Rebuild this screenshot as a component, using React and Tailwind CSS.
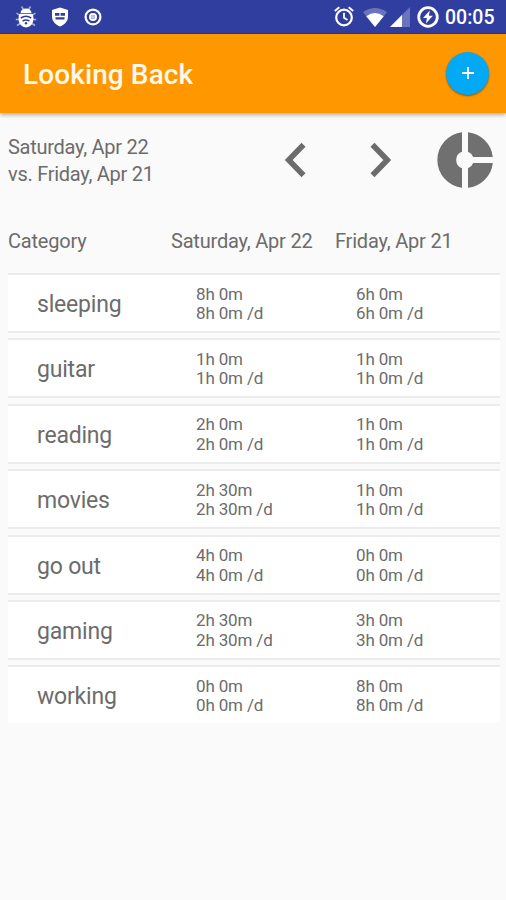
import React from 'react';

const rows = [
  { name: 'sleeping', current: '8h 0m', previous: '6h 0m' },
  { name: 'guitar', current: '1h 0m', previous: '1h 0m' },
  { name: 'reading', current: '2h 0m', previous: '1h 0m' },
  { name: 'movies', current: '2h 30m', previous: '1h 0m' },
  { name: 'go out', current: '4h 0m', previous: '0h 0m' },
  { name: 'gaming', current: '2h 30m', previous: '3h 0m' },
  { name: 'working', current: '0h 0m', previous: '8h 0m' },
];

const BugIcon = () => (
  <svg width="22" height="24" viewBox="0 0 22 24" fill="none">
    <path d="M6.500 1.500l2.500 4M15.500 1.500l-2.500 4M1.500 8l4 3M20.500 8l-4 3M.8 14.500h4M21.200 14.500h-4M2 20.500l4-2.500M20 20.500l-4-2.500" stroke="#a9b1e0" strokeWidth="1.500" />
    <path d="M5.500 8a5.500 4.600 0 0 1 11 0z" fill="#fff" />
    <path d="M4.500 8.800h13q1 2 1 5.200a7.500 8.500 0 0 1-15 0q0-3.200 1-5.200z" fill="#fff" />
    <path d="M5.800 13q5.200-3.400 10.400 0M7.600 16q3.400-2 6.800 0" stroke="#303f9f" strokeWidth="1.500" />
    <circle cx="11" cy="18.200" r="1.200" fill="#303f9f" />
  </svg>
);

const ShieldIcon = () => (
  <svg width="18" height="20" viewBox="0 0 18 20">
    <path d="M9 .5l8 2.500v6.500c0 4.500-3.200 8-8 10-4.800-2-8-5.500-8-10V3z" fill="#fff" />
    <path d="M4 6h4.400v2.800H4zM9.600 6H14v2.800H9.600zM4.500 10.200h9v2.300h-9z" fill="#303f9f" />
  </svg>
);

const TargetIcon = () => (
  <svg width="18" height="18" viewBox="0 0 18 18" fill="none">
    <circle cx="9" cy="9" r="7.400" stroke="#fff" strokeWidth="2.200" />
    <circle cx="9" cy="9" r="3" stroke="#fff" strokeWidth="2" />
    <circle cx="9" cy="9" r="2" fill="#c4caec" />
  </svg>
);

const AlarmIcon = () => (
  <svg width="20" height="21" viewBox="0 0 20 21" fill="none" stroke="#fff">
    <circle cx="10" cy="11.500" r="7.800" strokeWidth="2.200" />
    <path d="M10 6.800v5l3.500 2.200" strokeWidth="1.800" />
    <path d="M.8 5L5.300 1.200M19.200 5l-4.500-3.800" strokeWidth="1.900" />
  </svg>
);

const WifiIcon = () => (
  <svg width="24" height="19" viewBox="0 0 24 19">
    <path d="M12 19L0 4.200Q12-4.200 24 4.200z" fill="#6a74ba" />
    <path d="M12 19L3.300 8.200Q12 1.800 20.700 8.200z" fill="#fff" />
  </svg>
);

const SignalIcon = () => (
  <svg width="20" height="20" viewBox="0 0 20 20">
    <path d="M0 20L20 0v20z" fill="#6a74ba" />
    <path d="M0 20L12 8v12z" fill="#fff" />
  </svg>
);

const ChargingIcon = () => (
  <svg width="22" height="22" viewBox="0 0 22 22" fill="none">
    <circle cx="11" cy="11" r="9.300" stroke="#fff" strokeWidth="2.800" />
    <path d="M12.800 4.500L6 12h3.900l-1 5.500 7-7.800h-4z" fill="#fff" />
  </svg>
);

const DonutIcon = () => (
  <svg width="56" height="56" viewBox="0 0 56 56" fill="#707070">
    <path d="M25 .2v19.600a8.700 8.700 0 0 0 0 16.400v19.600A28 28 0 0 1 25 .2z" />
    <path d="M31 .2v19.600a8.700 8.700 0 0 1 5.200 5.200h19.600A28 28 0 0 0 31 .2z" />
    <path d="M31 55.800V36.200a8.700 8.700 0 0 0 5.200-5.200h19.600A28 28 0 0 1 31 55.800z" />
  </svg>
);

const StatusBar = () => (
  <div className="h-[34px] bg-[#303f9f] flex items-center justify-between pl-[15px] pr-[10px] border-b border-[#283593]">
    <div className="flex items-center">
      <BugIcon />
      <div className="ml-[14px]"><ShieldIcon /></div>
      <div className="ml-[15px]"><TargetIcon /></div>
    </div>
    <div className="flex items-center">
      <AlarmIcon />
      <div className="ml-[9px] mt-[2px]"><WifiIcon /></div>
      <div className="ml-[3px] mt-[1px]"><SignalIcon /></div>
      <div className="ml-[7px]"><ChargingIcon /></div>
      <span className="ml-[6px] w-[51px] mt-[2px] text-[19.5px] leading-6 font-medium text-white whitespace-nowrap">00:05</span>
    </div>
  </div>
);

const Duration = ({ value }) => (
  <div className="pt-[2px] text-[17px] leading-[19.5px] tracking-[-0.15px] whitespace-nowrap">
    <p>{value}</p>
    <p>{value} /d</p>
  </div>
);

const App = () => {
  return (
    <div className="w-full min-h-screen bg-[#fafafa] text-[#6c6c6c] font-['Roboto',sans-serif]">
      <StatusBar />

      {/* App bar */}
      <header className="h-[79px] bg-[#ff9800] flex items-center justify-between pl-[23px] pr-[17px] shadow-[0_2px_4px_rgba(0,0,0,0.3)]">
        <h1 className="text-[28px] leading-8 font-medium text-[#fff8ec] tracking-[0.1px] mt-[3px]">Looking Back</h1>
        <button type="button" aria-label="Add" className="w-[43px] h-[43px] mb-px rounded-full bg-[#03a9f4] flex items-center justify-center shadow-[0_1px_2px_rgba(0,0,0,0.45)]">
          <svg width="12" height="12" viewBox="0 0 12 12" stroke="#fff" strokeWidth="1.800">
            <path d="M6 0v12M0 6h12" />
          </svg>
        </button>
      </header>

      {/* Compared dates */}
      <section className="h-[93px] flex items-center pl-2 pr-[13px]">
        <div className="w-[276px] pt-[2px] text-[20px] leading-[27px] tracking-[-0.27px]">
          <p>Saturday, Apr 22</p>
          <p>vs. Friday, Apr 21</p>
        </div>
        <button type="button" aria-label="Previous day">
          <svg width="22" height="36" viewBox="0 0 22 36" fill="none" stroke="#6c6c6c" strokeWidth="5.600">
            <path d="M19.500 2.800L4.700 18l14.800 15.200" />
          </svg>
        </button>
        <button type="button" aria-label="Next day" className="ml-[63px]">
          <svg width="22" height="36" viewBox="0 0 22 36" fill="none" stroke="#6c6c6c" strokeWidth="5.600">
            <path d="M3.500 2.800L18.300 18 3.500 33.200" />
          </svg>
        </button>
        <button type="button" aria-label="Chart" className="ml-auto">
          <DonutIcon />
        </button>
      </section>

      {/* Table header */}
      <div className="h-[67px] pt-[23px] pl-2 grid grid-cols-[163px_164px_1fr] text-[20px] leading-[24px] tracking-[-0.2px]">
        <span>Category</span>
        <span>Saturday, Apr 22</span>
        <span>Friday, Apr 21</span>
      </div>

      <div className="pl-2 pr-[6px] flex flex-col gap-[5.4px]">
        {rows.map(row => (
          <div
            key={row.name}
            className="h-[60px] bg-white border-y-2 border-[#ececec] last:border-b-0 last:h-[58px] pl-[29px] grid grid-cols-[159px_160px_1fr] items-center"
          >
            <span className="pt-[4px] text-[23px] leading-[28px] tracking-[-0.2px]">{row.name}</span>
            <Duration value={row.current} />
            <Duration value={row.previous} />
          </div>
        ))}
      </div>
    </div>
  );
};

export default App;
